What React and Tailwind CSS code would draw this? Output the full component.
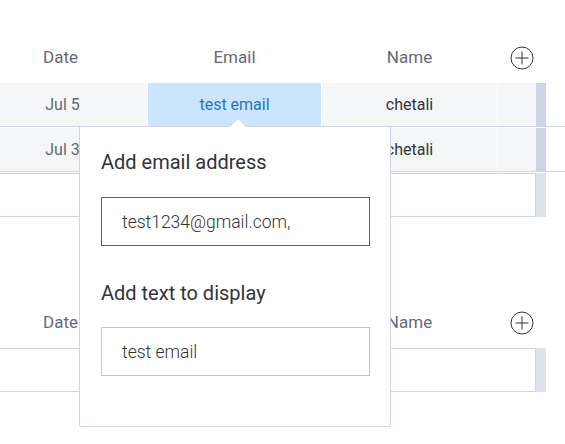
import { useState } from "react";

const lavender = "border-[#d0d4e4]";

function PlusIcon() {
  return (
    <svg width="24" height="24" viewBox="0 0 24 24" fill="none">
      <circle cx="12" cy="12" r="11" stroke="#323338" strokeWidth="1" />
      <path d="M12 5.5v13M5.5 12h13" stroke="#323338" strokeWidth="1" />
    </svg>
  );
}

function Header() {
  return (
    <div className="flex h-[50px] items-center text-[17px] text-[#676879]">
      <div className="w-[147px] pr-[26px] text-center">Date</div>
      <div className="ml-px w-[173px] text-center">Email</div>
      <div className="ml-px w-[175px] text-center">Name</div>
      <div className="ml-px flex w-[38px] justify-end pr-[2px]">
        <PlusIcon />
      </div>
    </div>
  );
}

function Row({ date, email, name, active }) {
  return (
    <div className={`mb-px flex h-[44px] border-b ${lavender} text-[16px]`}>
      <div className="flex w-[147px] items-center justify-center bg-[#f5f6f8] pr-[22px] text-[#676879]">
        {date}
      </div>
      <div
        className={`ml-px flex w-[173px] items-center justify-center ${
          active ? "bg-[#cce5ff] text-[#1f76c2]" : "bg-[#f5f6f8] text-[#323338]"
        }`}
      >
        {email}
      </div>
      <div className="ml-px flex w-[175px] items-center justify-center bg-[#f5f6f8] text-[#323338]">
        {name}
      </div>
      <div className="ml-px w-[38px] bg-[#f5f6f8]" />
      <div className="w-[10px] bg-[#cfd3e6]" />
    </div>
  );
}

function EmptyRow() {
  return (
    <div className="flex h-[44px]">
      <div className={`w-[536px] border-y border-r ${lavender} bg-white`} />
      <div className="w-[10px] bg-[#e0e2ea]" />
    </div>
  );
}

function EmailPopover() {
  const [email, setEmail] = useState("test1234@gmail.com,");
  const [text, setText] = useState("test email");

  return (
    <div className={`absolute left-[79px] top-[126px] h-[301px] w-[312px] rounded-[2px] border ${lavender} bg-white px-[21px]`}>
      <div className={`absolute left-[152px] top-[-7px] h-[12px] w-[12px] rotate-45 border-l border-t ${lavender} bg-white`} />
      <div className="pt-[21px] text-[20px] leading-[28px] text-[#323338]">Add email address</div>
      <div className="mt-[21px] flex h-[49px] w-[269px] border border-[#0073ea]">
        <input
          value={email}
          onChange={(e) => setEmail(e.target.value)}
          className="h-full w-full bg-transparent px-[20px] text-[17.5px] font-light text-[#323338] outline-none"
        />
      </div>
      <div className="pt-[33px] text-[20px] leading-[28px] text-[#323338]">Add text to display</div>
      <div className="mt-[20px] flex h-[49px] w-[269px] border border-[#c3c6d4]">
        <input
          value={text}
          onChange={(e) => setText(e.target.value)}
          className="h-full w-full bg-transparent px-[20px] text-[17.5px] font-light text-[#323338] outline-none"
        />
      </div>
    </div>
  );
}

export default function App() {
  return (
    <div className="relative h-[444px] w-[565px] overflow-hidden bg-white font-['Roboto',sans-serif]">
      <div className="pt-[33px]">
        <Header />
        <Row date="Jul 5" email="test email" name="chetali" active />
        <Row date="Jul 3" email="" name="chetali" />
        <EmptyRow />
      </div>

      <div className="pt-[81px]">
        <Header />
        <EmptyRow />
      </div>

      <EmailPopover />
    </div>
  );
}
